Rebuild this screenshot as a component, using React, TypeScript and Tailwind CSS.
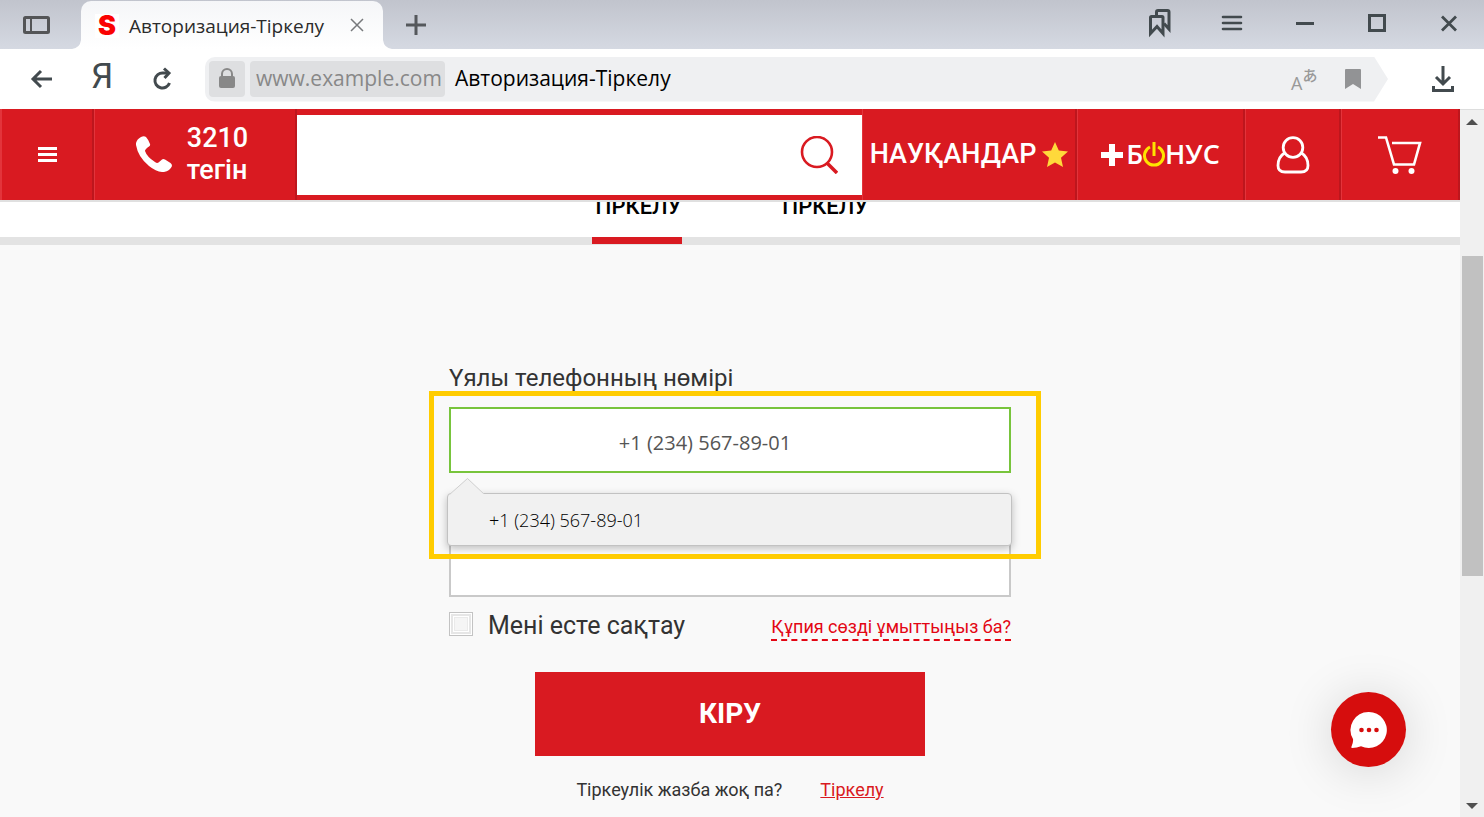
import type { ReactNode } from "react";

const icon = "fill-none stroke-[#424a4e]";

function Cell({ className, children }: { className: string; children: ReactNode }) {
  return (
    <div
      className={`flex shrink-0 items-center justify-center border-r-2 border-l border-r-[#bd161d] border-l-[#e3343b] ${className}`}
    >
      {children}
    </div>
  );
}

function TabStrip() {
  return (
    <div className="flex h-[49px] items-stretch bg-linear-to-b from-[#c1c4cd] to-[#d5d9e2]">
      <button aria-label="Панель" className="flex w-[81px] items-center pl-[23px]">
        <svg width="28" height="20" className="fill-none stroke-[#545557]" strokeWidth="3">
          <rect x="1.5" y="2.5" width="24" height="15" rx="1" />
          <path d="M8 3v14" strokeWidth="2" />
        </svg>
      </button>
      <div className="relative mt-px flex w-[302px] items-center rounded-t-[10px] bg-linear-to-b from-[#f5f6f8] to-white pt-[2px] pl-[14px]">
        <svg width="9" height="9" className="absolute bottom-0 -left-[9px] fill-white">
          <path d="M9 0v9H0Q8 8 9 0Z" />
        </svg>
        <svg width="9" height="9" className="absolute -right-[9px] bottom-0 fill-white">
          <path d="M0 0v9h9Q1 8 0 0Z" />
        </svg>
        <span className="flex h-6 w-6 items-center justify-center bg-white font-['Inter'] text-[27px] leading-7 font-black text-[#fa0202]">
          S
        </span>
        <span className="ml-[10px] grow text-[19px] leading-6 text-[#2b2b2b]">Авторизация-Тіркелу</span>
        <button aria-label="Жабу" className="mr-[18px] mb-[2px]">
          <svg width="16" height="16" className="stroke-[#77797c]" strokeWidth="1.5">
            <path d="M2 2l12 12M14 2L2 14" />
          </svg>
        </button>
      </div>
      <button aria-label="Жаңа бет" className="ml-[22px]">
        <svg width="22" height="22" className="stroke-[#55585c]" strokeWidth="3">
          <path d="M11 1v20M1 11h20" />
        </svg>
      </button>
      <div className="ml-auto flex items-center gap-12 pr-[25px] pb-[3px]">
        <button aria-label="Бетбелгілер">
          <svg width="26" height="30" className={icon} strokeWidth="3">
            <path d="M3.5 9.500q0-1 1-1h10.500q1 0 1 1v16l-6-7-6.500 7Z" />
            <path d="M9.500 8V4q0-1.500 1.500-1.500h9.500q1.500 0 1.500 1.500v17L17 15.500" />
          </svg>
        </button>
        <button aria-label="Мәзір">
          <svg width="22" height="18" className={icon} strokeWidth="2.600" strokeLinecap="round">
            <path d="M2 3h18M2 9h18M2 15h18" />
          </svg>
        </button>
        <button aria-label="Жию" className="ml-1">
          <svg width="20" height="20" className={icon} strokeWidth="3">
            <path d="M1 10.500h18" />
          </svg>
        </button>
        <button aria-label="Жаю" className="ml-1">
          <svg width="20" height="20" className={icon} strokeWidth="3">
            <rect x="2.5" y="2.5" width="15" height="15" />
          </svg>
        </button>
        <button aria-label="Терезені жабу" className="ml-1">
          <svg width="20" height="20" className={icon} strokeWidth="2.800">
            <path d="M3 3.500l14 14M17 3.500l-14 14" />
          </svg>
        </button>
      </div>
    </div>
  );
}

function AddressBar() {
  return (
    <div className="flex h-[60px] items-center bg-white">
      <button aria-label="Артқа" className="ml-[30px]">
        <svg width="24" height="22" className={icon} strokeWidth="3">
          <path d="M22 11H3M11 3L3 11l8 8" />
        </svg>
      </button>
      <button
        aria-label="Яндекс"
        className="mb-1 ml-[37px] w-5 font-['Roboto'] text-[35px] leading-8 text-[#424a4e]"
      >
        Я
      </button>
      <button aria-label="Жаңарту" className="ml-[40px]">
        <svg width="22" height="26" className={icon} strokeWidth="3">
          <path d="M18 7H12A7.500 7.500 0 1 0 18.500 17" />
          <path d="M13 2.500L18 7l-4.500 5" />
        </svg>
      </button>
      <div className="ml-8 flex h-[45px] grow items-center rounded-l-[10px] bg-[#eff0f2] pl-1 [clip-path:polygon(0_0,calc(100%-14px)_0,100%_50%,calc(100%-14px)_100%,0_100%)]">
        <button aria-label="Қорғалған" className="flex h-9 w-9 items-center justify-center rounded-[4px] bg-[#dedfe1]">
          <svg width="16" height="22" className="fill-[#888]">
            <rect y="8" width="16" height="12" rx="2" />
            <path d="M3 9V6a5 5 0 0 1 10 0v3" className="fill-none stroke-[#888]" strokeWidth="2" />
          </svg>
        </button>
        <span className="ml-[5px] flex h-9 w-[195px] items-center rounded-[4px] bg-[#dedfe1] pl-[6px] text-[21px] text-[#888]">
          www.example.com
        </span>
        <span className="ml-[10px] grow text-[21px] text-black">Авторизация-Тіркелу</span>
        <button aria-label="Аудару" className="flex h-7 w-7 text-[#999]">
          <span className="self-end font-['Open_Sans'] text-[18px] leading-5">A</span>
          <span className="font-['Noto_Sans_CJK_JP'] text-[15px] leading-5 font-medium">あ</span>
        </button>
        <button aria-label="Бетбелгі" className="mr-[27px] ml-[26px]">
          <svg width="16" height="20" className="fill-[#929395]">
            <path d="M1 0h14a1 1 0 0 1 1 1v19l-8-5-8 5V1a1 1 0 0 1 1-1Z" />
          </svg>
        </button>
      </div>
      <button aria-label="Жүктеулер" className="mr-[30px] ml-[44px]">
        <svg width="22" height="28" className={icon} strokeWidth="3">
          <path d="M11 1v18M4 12l7 7 7-7M1.500 21v4.500h19V21" />
        </svg>
      </button>
    </div>
  );
}

function ShopHeader() {
  return (
    <header className="relative z-10 flex h-[93px] border-b-2 border-[#e0e0e0] bg-[#d91a21] text-white">
      <Cell className="w-[94px] border-l-2 border-l-[#bd161d]">
        <button aria-label="Мәзір">
          <svg width="19" height="15" className="fill-white">
            <path d="M0 0h19v3H0zM0 6h19v3H0zM0 12h19v3H0z" />
          </svg>
        </button>
      </Cell>
      <Cell className="w-[203px] gap-[15px] pr-[6px] pb-[2px]">
        <svg width="36" height="36" viewBox="0 0 36 36" className="fill-white">
          <path d="M0 7Q1 3 5 1Q8-.5 10 1Q12 3 14 8Q14.500 9.500 13 10.500Q9 13 9 15Q11 21 19 26Q21 27.500 22.500 26.500L26 23.500Q27 22.500 29 23.500L34.500 27Q36 28 36 30Q34 35 28 36Q21 36.500 13 30Q2 21 0 9Z" />
        </svg>
        <a href="tel:3210" className="text-[27px] leading-8 font-medium">
          3210
          <br />
          тегін
        </a>
      </Cell>
      <form className="flex min-w-0 grow items-center border-t-6 border-b-5 border-t-[#d91a21] border-b-[#d91a21] bg-white">
        <input aria-label="Іздеу" className="h-full min-w-0 grow px-5 text-xl text-black outline-none" />
        <button type="button" aria-label="Іздеу" className="mr-[24px]">
          <svg width="38" height="38" className="fill-none stroke-[#d91a21]">
            <circle cx="17" cy="16" r="15" strokeWidth="2.600" />
            <path d="M27 27l10 10" strokeWidth="3.500" />
          </svg>
        </button>
      </form>
      <Cell className="w-[215px] gap-[6px]">
        <a href="#promo" className="text-[27px] font-medium">
          НАУҚАНДАР
        </a>
        <svg width="26" height="26" viewBox="0 0 26 26" className="fill-[#ffd93b]">
          <path d="M13 0l3.800 8.500 9.200 1-7 6.200L21 25l-8-4.600L5 25l2-9.300-7-6.200 9.200-1Z" />
        </svg>
      </Cell>
      <Cell className="w-[168px]">
        <a href="#bonus" className="flex items-center font-['Open_Sans'] text-[27px] font-semibold">
          <svg width="22" height="24" className="mr-[3px] stroke-white" strokeWidth="6">
            <path d="M11 1v22M0 12h22" />
          </svg>
          Б
          <svg width="22" height="26" className="fill-none stroke-[#fee300]" strokeWidth="3">
            <path d="M7 5a9.500 9.500 0 1 0 8 0M11 0v14" />
          </svg>
          НУС
        </a>
      </Cell>
      <Cell className="w-[96px]">
        <button aria-label="Кабинет">
          <svg width="34" height="38" className="fill-none stroke-white" strokeWidth="2.800">
            <circle cx="17" cy="11.500" r="9.800" />
            <path d="M8.500 17Q2 21 2 29.500Q2 36 9 36H25Q32 36 32 29.500Q32 21 25.500 17" />
          </svg>
        </button>
      </Cell>
      <Cell className="w-[119px]">
        <button aria-label="Себет">
          <svg width="44" height="40" className="fill-none stroke-white" strokeWidth="2.600">
            <path d="M0 2.500h8L16 29.500h20L42 8H14" />
            <circle cx="17.500" cy="36" r="3" className="fill-white stroke-none" />
            <circle cx="33.500" cy="36" r="3" className="fill-white stroke-none" />
          </svg>
        </button>
      </Cell>
    </header>
  );
}

function PhoneHint() {
  return (
    <div className="absolute top-[86px] -right-px -left-[2px] z-10 flex h-[53px] items-center rounded-[4px] border border-[#c2c2c2] bg-[#f1f1f1] pt-[2px] pl-[41px] font-['Open_Sans'] text-[18px] font-light text-black shadow-[0_3px_8px_rgba(0,0,0,0.25)]">
      <svg width="38" height="17" className="absolute -top-[17px] left-px fill-[#f1f1f1] stroke-[#cfcfcf]">
        <path d="M0 18L18.500 1.500 36 18" />
      </svg>
      +1 (234) 567-89-01
    </div>
  );
}

function LoginForm() {
  return (
    <form className="mx-auto flex w-[562px] flex-col pt-[119px] text-[#333]">
      <label htmlFor="phone" className="text-[24px] leading-7">
        Үялы телефонның нөмірі
      </label>
      <div className="relative mt-[15px]">
        <input
          id="phone"
          defaultValue="+1 (234) 567-89-01"
          className="block h-[66px] w-full border-2 border-[#78c43c] bg-white pt-1 pr-[50px] text-center font-['Open_Sans'] text-[20px] text-[#555] outline-none"
        />
        <PhoneHint />
        <input
          type="password"
          aria-label="Құпия сөз"
          className="mt-[58px] block h-[66px] w-full border-2 border-[#c9c9c9] bg-white px-5 outline-none"
        />
        <div className="pointer-events-none absolute -top-4 -right-[30px] -left-5 z-20 h-[168px] border-5 border-[#fc0]" />
      </div>
      <div className="mt-[13px] flex h-8 items-center">
        <input
          id="remember"
          type="checkbox"
          className="mb-1 h-6 w-6 appearance-none border border-[#c3c3c3] bg-[#f5f5f5] shadow-[inset_0_0_0_1px_#fff,inset_0_0_0_3px_#e6e6e6,inset_0_0_0_4px_#fff,inset_0_0_0_5px_#eaeaea]"
        />
        <label htmlFor="remember" className="ml-[15px] text-[25px]">
          Мені есте сақтау
        </label>
        <a href="#forgot" className="ml-auto border-b-2 border-dashed border-[#e30613] pt-1 text-[18px] leading-6 text-[#e30613]">
          Құпия сөзді ұмыттыңыз ба?
        </a>
      </div>
      <button type="button" className="mt-[30px] h-[84px] w-[390px] self-center bg-[#d91a21] text-[28px] font-bold text-white">
        КІРУ
      </button>
      <p className="mt-[22px] flex justify-center gap-[38px] text-[18px] leading-6">
        Тіркеулік жазба жоқ па?
        <a href="#register" className="text-[#d91a21] underline">
          Тіркелу
        </a>
      </p>
    </form>
  );
}

function Scrollbar() {
  return (
    <div className="flex w-6 flex-col items-center border-t border-[#ddd] bg-[#f0f0f0]">
      <svg width="12" height="6" className="mt-[9px] fill-[#505050]">
        <path d="M0 6l6-6 6 6Z" />
      </svg>
      <div className="mt-[131px] h-[320px] w-[21px] bg-[#c1c1c1]" />
      <svg width="12" height="6" className="mt-auto mb-2 fill-[#505050]">
        <path d="M0 0h12L6 6Z" />
      </svg>
    </div>
  );
}

export default function App() {
  return (
    <div className="flex h-screen flex-col overflow-hidden font-['Open_Sans','Noto_Sans_CJK_JP',sans-serif]">
      <TabStrip />
      <AddressBar />
      <div className="flex min-h-0 grow">
        <main className="relative min-w-0 grow overflow-hidden bg-[#f9f9f9] font-['Roboto',sans-serif]">
          <ShopHeader />
          <nav className="-mt-[9px] flex h-[52px] items-stretch justify-center gap-[97px] border-b-8 border-[#e3e3e3] bg-white text-[22px] leading-7 font-medium text-black">
            <a href="#login" className="-mb-[7px] border-b-7 border-[#d91a21]">
              ТІРКЕЛУ
            </a>
            <a href="#signup">ТІРКЕЛУ</a>
          </nav>
          <LoginForm />
          <button
            aria-label="Чат"
            className="absolute right-[54px] bottom-[50px] flex h-[75px] w-[75px] items-center justify-center rounded-full bg-[#d60d0d] shadow-[0_4px_50px_rgba(0,0,0,0.15)]"
          >
            <svg width="38" height="38" className="fill-white">
              <path d="M19 1a18 18 0 1 1-8 34.200Q7 37 2 37Q1 37 1.500 35.500Q3.500 31 3 28A18 18 0 0 1 19 1Z" />
              <g className="fill-[#d60d0d]">
                <circle cx="11.500" cy="19" r="2.300" />
                <circle cx="19" cy="19" r="2.300" />
                <circle cx="26.500" cy="19" r="2.300" />
              </g>
            </svg>
          </button>
        </main>
        <Scrollbar />
      </div>
    </div>
  );
}
